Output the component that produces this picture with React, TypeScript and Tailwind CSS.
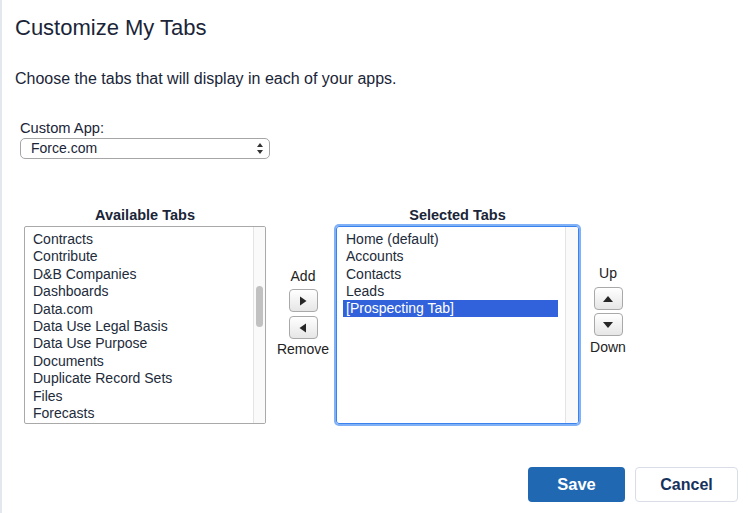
import React from "react";

const available = [
  "Contracts",
  "Contribute",
  "D&B Companies",
  "Dashboards",
  "Data.com",
  "Data Use Legal Basis",
  "Data Use Purpose",
  "Documents",
  "Duplicate Record Sets",
  "Files",
  "Forecasts",
];

const selected = ["Home (default)", "Accounts", "Contacts", "Leads", "[Prospecting Tab]"];

function Arrow({ dir }: { dir: "right" | "left" | "up" | "down" }) {
  const pts = {
    right: "2,0.5 8.5,5 2,9.5",
    left: "8,0.5 1.5,5 8,9.5",
    up: "1,8 6,2 11,8",
    down: "1,2 6,8 11,2",
  }[dir];
  const w = dir === "up" || dir === "down" ? 12 : 10;
  return (
    <svg width={w} height="10" viewBox={`0 0 ${w} 10`}>
      <polygon points={pts} fill="#262626" />
    </svg>
  );
}

function ArrowButton({ dir }: { dir: "right" | "left" | "up" | "down" }) {
  return (
    <button className="w-[29px] h-[23px] flex items-center justify-center rounded-[4px] border border-[#a9a9a9] bg-gradient-to-b from-white to-[#e6e6e6]">
      <Arrow dir={dir} />
    </button>
  );
}

export default function App() {
  return (
    <div
      className="w-[750px] h-[513px] bg-white border-l-2 border-[#e3e8ee] text-[#1a2538] overflow-hidden"
      style={{ fontFamily: '"Liberation Sans", Arial, sans-serif' }}
    >
      <h1 className="pl-[13px] pt-[14px] text-[22px] leading-[28px]">Customize My Tabs</h1>
      <p className="pl-[13px] mt-[28px] text-[16px] leading-[18px]">
        Choose the tabs that will display in each of your apps.
      </p>

      <div className="pl-[18px] mt-[32px]">
        <div className="text-[14.7px] leading-[17px]">Custom App:</div>
        <div className="mt-[1px] w-[250px] h-[21px] rounded-[5px] border border-[#a6a6a6] flex items-center justify-between pl-[10px] pr-[6px] text-[14px]">
          <span>Force.com</span>
          <svg width="6" height="11" viewBox="0 0 6 11">
            <polygon points="0,4 3,0 6,4" fill="#333" />
            <polygon points="0,7 3,11 6,7" fill="#333" />
          </svg>
        </div>
      </div>

      <div className="flex items-start mt-[48px] pl-[22px]">
        {/* available */}
        <div className="w-[242px] flex flex-col">
          <div className="text-center text-[14.5px] leading-[16px] font-bold">Available Tabs</div>
          <div className="mt-[3px] h-[198px] flex border border-[#a9a9a9] rounded-[2px] overflow-hidden">
            <ul className="flex-1 pl-[6px] pt-[4px] text-[14px] leading-[17.4px] text-[#222b3a]">
              {available.map((t) => (
                <li key={t} className="pl-[2px]">{t}</li>
              ))}
            </ul>
            <div className="w-[12px] border-l border-[#e4e4e4] bg-[#fafafa] pt-[59px] flex justify-center">
              <div className="w-[7px] h-[41px] rounded-full bg-[#c1c1c1]" />
            </div>
          </div>
        </div>

        {/* add / remove */}
        <div className="ml-[4px] w-[66px] pt-[61px] flex flex-col items-center text-[14px] leading-[17px] text-[#222]">
          <span>Add</span>
          <div className="mt-[4px]"><ArrowButton dir="right" /></div>
          <div className="mt-[4px]"><ArrowButton dir="left" /></div>
          <span className="mt-[2px]">Remove</span>
        </div>

        {/* selected */}
        <div className="w-[243px] flex flex-col">
          <div className="text-center text-[14.5px] leading-[16px] font-bold">Selected Tabs</div>
          <div className="mt-[3px] h-[198px] flex border border-[#3b82ee] rounded-[3px] shadow-[0_0_0_2px_#80b1f7] overflow-hidden">
            <ul className="flex-1 pl-[6px] pr-[7px] pt-[4px] text-[14px] leading-[17.3px] text-[#222b3a]">
              {selected.map((t, i) => (
                <li
                  key={t}
                  className={i === 4 ? "pl-[3px] bg-[#3162dc] text-white" : "pl-[3px]"}
                >
                  {t}
                </li>
              ))}
            </ul>
            <div className="w-[13px] border-l border-[#e4e4e4] bg-[#fafafa]" />
          </div>
        </div>

        {/* up / down */}
        <div className="w-[58px] pt-[58px] flex flex-col items-center text-[14px] leading-[17px] text-[#222]">
          <span>Up</span>
          <div className="mt-[5px]"><ArrowButton dir="up" /></div>
          <div className="mt-[3px]"><ArrowButton dir="down" /></div>
          <span className="mt-[3px]">Down</span>
        </div>
      </div>

      <div className="flex justify-end gap-[10px] pr-[12px] mt-[43px]">
        <button className="w-[97px] h-[35px] rounded-[4px] bg-[#2168b3] text-white font-bold text-[16.5px]">
          Save
        </button>
        <button className="w-[103px] h-[35px] rounded-[4px] border border-[#d8dde6] bg-white text-[#16325c] font-bold text-[16px]">
          Cancel
        </button>
      </div>
    </div>
  );
}
